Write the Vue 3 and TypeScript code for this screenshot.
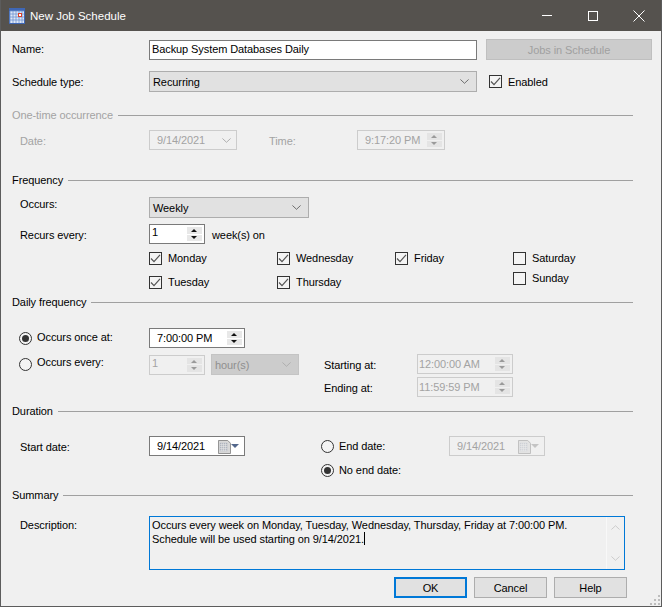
<script setup lang="ts">
const dayColumns = [
  { cls: 'col-a', days: [{ name: 'Monday', on: true }, { name: 'Tuesday', on: true }] },
  { cls: 'col-b', days: [{ name: 'Wednesday', on: true }, { name: 'Thursday', on: true }] },
  { cls: 'col-c', days: [{ name: 'Friday', on: true }] },
  { cls: 'col-d', days: [{ name: 'Saturday', on: false }, { name: 'Sunday', on: false }] },
]
const gripDots = [0, 1, 2, 3, 4, 5]
</script>

<template>
  <div class="window">
    <svg class="sprite" width="0" height="0" aria-hidden="true">
      <symbol id="chev" viewBox="0 0 11 6">
        <path d="M.5.5 5.5 5.2 10.5.5" fill="none" stroke="currentColor" stroke-width="1" />
      </symbol>
      <symbol id="tick" viewBox="0 0 11 11">
        <path d="M1 5.5 4 8.6 10 1.8" fill="none" stroke="currentColor" stroke-width="1.2" />
      </symbol>
      <symbol id="cal" viewBox="0 0 14 15">
        <path d="M.5.5h10l3 3v11H.5z" fill="#d8d8d8" stroke="#8a8a8a" />
        <path d="M2 3h8v9H2z" fill="#aab0bb" />
        <path d="M2 5h8M2 7h8M2 9h8M2 11h8M4 3v9M6 3v9M8 3v9" stroke="#e8e8e8" stroke-width=".7" />
      </symbol>
    </svg>

    <header class="titlebar">
      <svg class="app-icon" viewBox="0 0 16 16">
        <rect x="0" y="0" width="16" height="16" fill="#3f67b5" />
        <path d="M1 3h14v12H1z" fill="#dfe8f6" />
        <path d="M1 3h14M1 6h14M1 9h14M1 12h14M1 3v12M4 3v12M7 3v12M10 3v12M13 3v12" stroke="#6f94d2" stroke-width=".8" />
        <rect x="9.5" y="5.5" width="3" height="3" fill="#fff" stroke="#d9402b" />
      </svg>
      <span class="title">New Job Schedule</span>
      <div class="win-btn"><span class="min-line"></span></div>
      <div class="win-btn"><span class="max-box"></span></div>
      <div class="win-btn">
        <svg width="12" height="12" viewBox="0 0 12 12"><path d="M.5.5l11 11M11.5.5l-11 11" stroke="#fff" fill="none" /></svg>
      </div>
    </header>

    <main class="form">
      <div class="row name-row">
        <label class="lbl nudge-up">Name:</label>
        <div class="field name-input"><span class="nudge-up">Backup System Databases Daily</span></div>
        <button class="btn-disabled">Jobs in Schedule</button>
      </div>

      <div class="row type-row">
        <label class="lbl">Schedule type:</label>
        <div class="combo type-combo">
          <span>Recurring</span>
          <svg class="chev"><use href="#chev" /></svg>
        </div>
        <span class="check enabled-check">
          <span class="box"><svg><use href="#tick" /></svg></span>Enabled
        </span>
      </div>

      <div class="group onetime off">One-time occurrence</div>

      <div class="row date-row off">
        <label class="sub lowered">Date:</label>
        <div class="field-off date-pick">
          <span>9/14/2021</span>
          <svg class="chev"><use href="#chev" /></svg>
        </div>
        <label class="time-lbl lowered">Time:</label>
        <div class="field-off spin time-off">
          <span>9:17:20 PM</span>
          <span class="spin-btns"><i class="up"></i><i class="down"></i></span>
        </div>
      </div>

      <div class="group frequency">Frequency</div>

      <div class="row occurs-row">
        <label class="sub raised-more">Occurs:</label>
        <div class="combo occurs-combo">
          <span>Weekly</span>
          <svg class="chev"><use href="#chev" /></svg>
        </div>
      </div>

      <div class="row recurs-row">
        <label class="sub lowered">Recurs every:</label>
        <div class="field num spin">
          <span class="num-val">1</span>
          <span class="spin-btns dark"><i class="up"></i><i class="down"></i></span>
        </div>
        <span class="unit lowered">week(s) on</span>
      </div>

      <div class="days">
        <div v-for="col in dayColumns" :key="col.cls" class="day-col" :class="col.cls">
          <span v-for="d in col.days" :key="d.name" class="check">
            <span class="box"><svg v-if="d.on"><use href="#tick" /></svg></span>{{ d.name }}
          </span>
        </div>
      </div>

      <div class="group daily">Daily frequency</div>

      <div class="daily-body">
        <div class="daily-left">
          <div class="row once-row">
            <span class="radio sel"></span><span class="radio-lbl">Occurs once at:</span>
            <div class="field time-on spin">
              <span>7:00:00 PM</span>
              <span class="spin-btns dark"><i class="up"></i><i class="down"></i></span>
            </div>
          </div>
          <div class="row every-row">
            <span class="radio"></span><span class="radio-lbl raised">Occurs every:</span>
            <div class="field-off num spin off">
              <span class="num-val">1</span>
              <span class="spin-btns"><i class="up"></i><i class="down"></i></span>
            </div>
            <div class="combo-off">
              <span>hour(s)</span>
              <svg class="chev"><use href="#chev" /></svg>
            </div>
          </div>
        </div>
        <div class="daily-right">
          <div class="row range-row">
            <label class="range-lbl lowered">Starting at:</label>
            <div class="field-off time-range spin off">
              <span>12:00:00 AM</span>
              <span class="spin-btns"><i class="up"></i><i class="down"></i></span>
            </div>
          </div>
          <div class="row range-row second">
            <label class="range-lbl lowered">Ending at:</label>
            <div class="field-off time-range spin off">
              <span>11:59:59 PM</span>
              <span class="spin-btns"><i class="up"></i><i class="down"></i></span>
            </div>
          </div>
        </div>
      </div>

      <div class="group duration">Duration</div>

      <div class="row start-row">
        <label class="sub lowered">Start date:</label>
        <div class="field date-on">
          <span>9/14/2021</span>
          <svg class="cal"><use href="#cal" /></svg>
          <i class="cal-arrow"></i>
        </div>
        <span class="radio end-radio"></span><span class="radio-lbl end-lbl">End date:</span>
        <div class="field-off date-on off end-date">
          <span>9/14/2021</span>
          <svg class="cal faded"><use href="#cal" /></svg>
          <i class="cal-arrow"></i>
        </div>
      </div>

      <div class="row noend-row">
        <span class="radio sel end-radio"></span><span class="radio-lbl">No end date:</span>
      </div>

      <div class="group summary">Summary</div>

      <div class="row desc-row">
        <label class="sub desc-lbl">Description:</label>
        <div class="desc">
          <div class="desc-text">
            Occurs every week on Monday, Tuesday, Wednesday, Thursday, Friday at 7:00:00 PM.<br />
            Schedule will be used starting on 9/14/2021.<span class="caret"></span>
          </div>
          <div class="scroll">
            <svg class="scroll-up"><use href="#chev" /></svg>
            <svg class="scroll-down"><use href="#chev" /></svg>
          </div>
        </div>
      </div>

      <div class="row actions">
        <button class="btn default">OK</button>
        <button class="btn">Cancel</button>
        <button class="btn">Help</button>
      </div>
    </main>

    <div class="grip">
      <i v-for="n in gripDots" :key="n" :class="'dot-' + n"></i>
    </div>
  </div>
</template>

<style>
html, body {
  margin: 0;
  background: #f0f0f0;
}
</style>

<style scoped>
.window {
  position: relative;
  box-sizing: border-box;
  width: 662px;
  height: 607px;
  overflow: hidden;
  background: #f0f0f0;
  border: 1px solid #5c5c5c;
  border-top: 0;
  font-family: 'Liberation Sans', Arial, sans-serif;
  font-size: 11px;
  letter-spacing: -0.09px;
  color: #000;
}

.sprite {
  position: absolute;
}

.titlebar {
  display: flex;
  align-items: center;
  height: 31px;
  margin: 0 -1px;
  background: #55524e;
  color: #fff;
  font-size: 11.5px;
  letter-spacing: 0;
}

.app-icon {
  width: 16px;
  height: 16px;
  margin-left: 9px;
}

.title {
  margin-left: 5px;
  flex: 1;
}

.win-btn {
  display: flex;
  align-items: center;
  justify-content: center;
  width: 46px;
  height: 31px;
}

.min-line {
  width: 10px;
  height: 1px;
  background: #fff;
}

.max-box {
  box-sizing: border-box;
  width: 10px;
  height: 10px;
  border: 1px solid #fff;
}

.row {
  display: flex;
  align-items: center;
}

.form {
  display: block;
}

.lbl {
  width: 137px;
  margin-left: 11px;
  flex-shrink: 0;
}

.sub {
  width: 129px;
  margin-left: 19px;
  flex-shrink: 0;
}

.raised {
  position: relative;
  top: -3px;
}

.raised-more {
  position: relative;
  top: -4px;
}

.lowered {
  position: relative;
  top: 1px;
}

.nudge-up {
  position: relative;
  top: -1px;
}

.off {
  color: #a3a3a3;
}

.name-row {
  height: 21px;
  margin-top: 8px;
}

.field {
  box-sizing: border-box;
  display: flex;
  align-items: center;
  height: 20px;
  background: #fff;
  border: 1px solid #7a7a7a;
  flex-shrink: 0;
}

.field-off {
  box-sizing: border-box;
  display: flex;
  align-items: center;
  height: 20px;
  background: #f0f0f0;
  border: 1px solid #cccccc;
  flex-shrink: 0;
}

.name-input {
  width: 328px;
  padding-left: 2px;
}

.btn-disabled {
  box-sizing: border-box;
  width: 166px;
  height: 21px;
  margin-left: 9px;
  padding: 0;
  background: #cccccc;
  border: 1px solid #bfbfbf;
  color: #a0a0a0;
  font: inherit;
  letter-spacing: inherit;
}

.type-row {
  height: 21px;
  margin-top: 11px;
}

.combo,
.combo-off {
  box-sizing: border-box;
  display: flex;
  align-items: center;
  justify-content: space-between;
  height: 21px;
  padding: 0 7px 0 3px;
  background: #e1e1e1;
  border: 1px solid #adadad;
  flex-shrink: 0;
}

.chev {
  width: 9px;
  height: 5px;
  color: #555;
}

.type-combo {
  width: 328px;
}

.enabled-check {
  margin-left: 12px;
}

.check {
  display: flex;
  align-items: center;
  height: 14px;
}

.box {
  box-sizing: border-box;
  display: flex;
  align-items: center;
  justify-content: center;
  width: 13px;
  height: 13px;
  margin-right: 6px;
  background: #f4f4f4;
  border: 1px solid #333;
  color: #555;
}

.box svg {
  width: 11px;
  height: 11px;
}

.group {
  display: flex;
  align-items: center;
  height: 14px;
  width: 621px;
  margin-left: 11px;
}

.group::after {
  content: '';
  flex: 1;
  height: 1px;
  margin-left: 5px;
  background: #a0a0a0;
}

.onetime {
  margin-top: 16px;
}

.date-row {
  height: 20px;
  margin-top: 8px;
}

.date-pick {
  justify-content: space-between;
  width: 88px;
  padding: 0 5px 0 7px;
}

.date-pick .chev {
  color: #a0a0a0;
}

.time-lbl {
  width: 88px;
  margin-left: 32px;
  flex-shrink: 0;
}

.spin {
  position: relative;
}

.time-off {
  width: 88px;
  padding-left: 7px;
}

/* up / down buttons of the numeric fields */
.spin-btns {
  position: absolute;
  top: 2px;
  right: 2px;
  bottom: 2px;
  display: flex;
  flex-direction: column;
  gap: 1px;
  width: 15px;
}

.spin-btns i {
  position: relative;
  flex: 1;
  background: #e4e4e4;
}

.spin-btns i::after {
  content: '';
  position: absolute;
  left: 4px;
  border-left: 3.5px solid transparent;
  border-right: 3.5px solid transparent;
}

.spin-btns .up::after {
  top: 2px;
  border-bottom: 3.5px solid #9a9a9a;
}

.spin-btns .down::after {
  bottom: 2px;
  border-top: 3.5px solid #9a9a9a;
}

.spin-btns.dark i {
  background: #e8e8e8;
}

.spin-btns.dark .up::after {
  border-bottom-color: #111;
}

.spin-btns.dark .down::after {
  border-top-color: #111;
}

.frequency {
  margin-top: 23px;
}

.occurs-row {
  height: 21px;
  margin-top: 10px;
}

.occurs-combo {
  width: 160px;
}

.recurs-row {
  height: 20px;
  margin-top: 6px;
}

.num {
  align-items: flex-start;
  width: 56px;
  padding: 1px 0 0 2px;
}

.unit {
  margin-left: 7px;
}

.days {
  display: flex;
  height: 38px;
  margin-top: 7px;
  margin-left: 148px;
}

.day-col {
  display: flex;
  flex-direction: column;
  gap: 10px;
}

.col-a {
  width: 128px;
}

.col-b,
.col-c {
  width: 118px;
}

.col-d {
  gap: 6px;
}

.daily {
  margin-top: 6px;
}

.daily-body {
  display: flex;
  height: 69px;
  margin-top: 19px;
}

.daily-left {
  width: 323px;
  flex-shrink: 0;
}

.once-row {
  height: 20px;
}

.every-row {
  height: 21px;
  margin-top: 6px;
}

.radio {
  position: relative;
  box-sizing: border-box;
  width: 13px;
  height: 13px;
  margin-left: 18px;
  background: #f4f4f4;
  border: 1px solid #333;
  border-radius: 50%;
  flex-shrink: 0;
}

.radio.sel::after {
  content: '';
  position: absolute;
  top: 2px;
  left: 2px;
  width: 7px;
  height: 7px;
  background: #333;
  border-radius: 50%;
}

.radio-lbl {
  width: 112px;
  margin-left: 5px;
  flex-shrink: 0;
}

.once-row .radio-lbl {
  position: relative;
  top: -1px;
}

.time-on {
  width: 96px;
  padding-left: 7px;
}

.combo-off {
  width: 88px;
  margin-left: 6px;
  background: #cccccc;
  border-color: #c4c4c4;
  color: #8f8f8f;
}

.combo-off .chev {
  color: #a8a8a8;
}

.daily-right {
  padding-top: 26px;
}

.range-row {
  height: 20px;
}

.range-row.second {
  margin-top: 3px;
}

.range-lbl {
  width: 93px;
  flex-shrink: 0;
}

.time-range {
  width: 96px;
  padding-left: 1px;
}

.duration {
  margin-top: 7px;
}

.start-row {
  height: 20px;
  margin-top: 18px;
}

.date-on {
  position: relative;
  width: 96px;
  padding-left: 7px;
}

.cal {
  position: absolute;
  top: 3px;
  left: 68px;
  width: 13px;
  height: 14px;
}

.cal.faded {
  opacity: .5;
}

.cal-arrow {
  position: absolute;
  top: 7px;
  left: 81px;
  border-left: 4px solid transparent;
  border-right: 4px solid transparent;
  border-top: 4px solid #54688c;
}

.end-date .cal-arrow {
  border-top-color: #c4c4c4;
}

.end-radio {
  margin-left: 76px;
}

.end-lbl {
  width: 110px;
}

.noend-row {
  height: 20px;
  margin-top: 4px;
  margin-left: 244px;
}

.summary {
  margin-top: 8px;
}

.desc-row {
  align-items: flex-start;
  height: 54px;
  margin-top: 14px;
}

.desc-lbl {
  margin-top: 3px;
}

.desc {
  box-sizing: border-box;
  display: flex;
  width: 476px;
  height: 54px;
  border: 1px solid #0078d7;
}

.desc-text {
  flex: 1;
  padding: 2px 0 0 2px;
  line-height: 13px;
  white-space: nowrap;
}

.caret {
  display: inline-block;
  width: 1px;
  height: 13px;
  vertical-align: -2px;
  background: #000;
}

.scroll {
  display: flex;
  flex-direction: column;
  justify-content: space-between;
  align-items: center;
  box-sizing: border-box;
  width: 18px;
  padding: 8px 0;
  border-left: 1px solid #f8f8f8;
  color: #c4c4c4;
}

.scroll svg {
  width: 9px;
  height: 5px;
}

.scroll-up {
  transform: scaleY(-1);
}

.actions {
  justify-content: flex-end;
  gap: 7px;
  width: 626px;
  height: 21px;
  margin-top: 7px;
}

.btn {
  box-sizing: border-box;
  width: 73px;
  height: 21px;
  padding: 0;
  background: #e1e1e1;
  border: 1px solid #adadad;
  color: #000;
  font: inherit;
  letter-spacing: inherit;
}

.btn.default {
  border: 2px solid #0078d7;
}

.grip {
  position: absolute;
  right: 1px;
  bottom: 1px;
  width: 10px;
  height: 10px;
}

.grip i {
  position: absolute;
  width: 2px;
  height: 2px;
  background: #bdbdbd;
}

.grip .dot-0 { right: 0; bottom: 0; }
.grip .dot-1 { right: 4px; bottom: 0; }
.grip .dot-2 { right: 8px; bottom: 0; }
.grip .dot-3 { right: 0; bottom: 4px; }
.grip .dot-4 { right: 4px; bottom: 4px; }
.grip .dot-5 { right: 0; bottom: 8px; }
</style>
